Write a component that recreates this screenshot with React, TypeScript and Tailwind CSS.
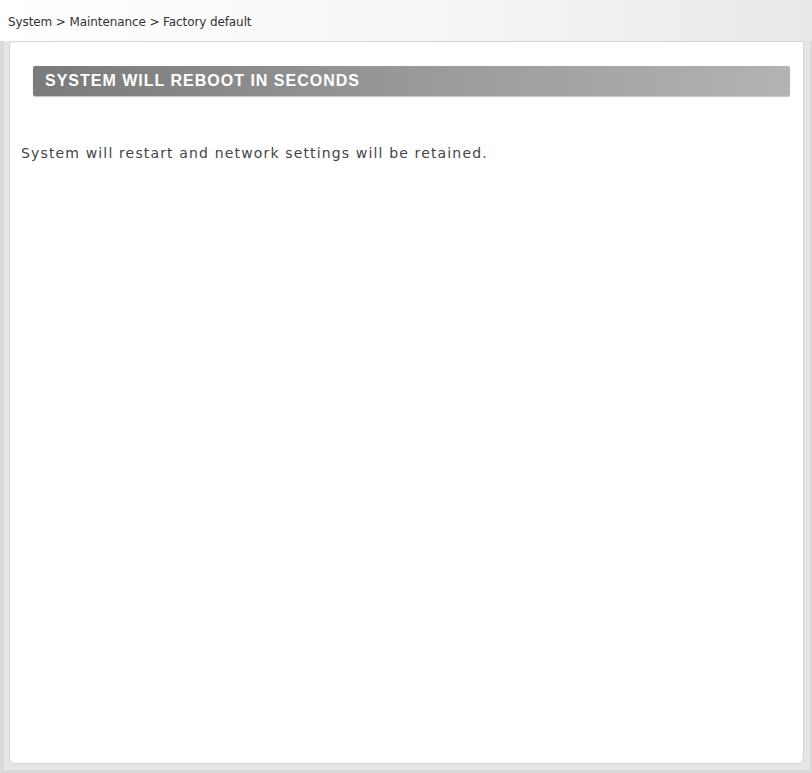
export default function App() {
  return (
    <div className="w-[812px] h-[773px] bg-white flex flex-col overflow-hidden font-['DejaVu_Sans',sans-serif]">
      {/* breadcrumb bar */}
      <div className="h-[41px] shrink-0 bg-gradient-to-r from-white via-[#f7f7f7] to-[#e9e9e9] flex items-start pl-[8px] pt-[15px]">
        <span className="text-[12px] leading-[14px] text-[#333] tracking-[-0.1px]">
          System &gt; Maintenance &gt; Factory default
        </span>
      </div>
      {/* frame */}
      <div className="flex-1 flex flex-col bg-[#d9d9d9] pl-[4px] pr-[2px] pb-[3px]">
        <div className="flex-1 flex flex-col bg-[#e6e6e6] pl-[5px] pr-[6px] pb-[6px]">
          <div className="flex-1 bg-white border border-[#d4d4d4] rounded-tl-[4px] rounded-bl-[6px] rounded-br-[6px] flex flex-col pt-[24px]">
            <div className="ml-[23px] mr-[13px] h-[30px] rounded-[2px] bg-gradient-to-r from-[#7a7a7a] via-[#999] to-[#b3b3b3] flex items-center pl-[12px] shadow-[0_1px_1px_rgba(0,0,0,0.25)]">
              <span className="text-white font-bold text-[16px] font-['Liberation_Sans',sans-serif] tracking-[1px]">
                SYSTEM WILL REBOOT IN SECONDS
              </span>
            </div>
            <p className="mt-[48px] pl-[11px] text-[14px] leading-[18px] text-[#444] tracking-[1.15px]">
              System will restart and network settings will be retained.
            </p>
          </div>
        </div>
      </div>
    </div>
  );
}
